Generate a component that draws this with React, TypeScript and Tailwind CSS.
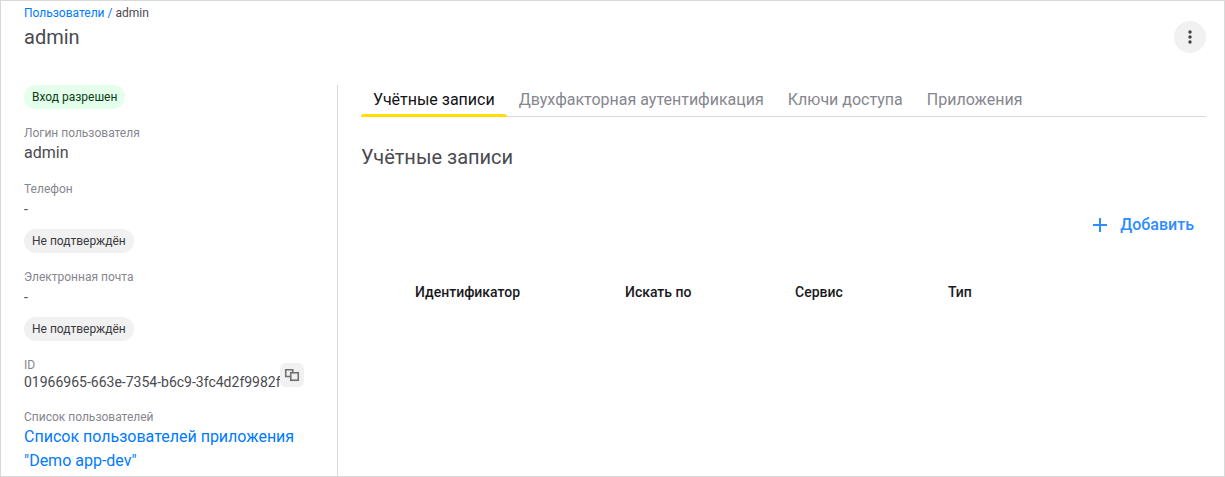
import { useState, type ReactNode } from 'react';

const tabs = ['Учётные записи', 'Двухфакторная аутентификация', 'Ключи доступа', 'Приложения'];

interface FieldProps {
  label: string;
  children: ReactNode;
}

function Field({ label, children }: FieldProps) {
  return (
    <div>
      <dt className="text-xs text-[#86868e]">{label}</dt>
      <dd className="text-base">{children}</dd>
    </div>
  );
}

function Badge({ tone, children }: { tone: 'green' | 'gray'; children: ReactNode }) {
  const color = tone === 'green' ? 'bg-[#e4ffeb] text-[#0a3d14]' : 'bg-[#f1f1f1] text-[#3a3a3f]';
  return <span className={`block w-fit rounded-full px-2 text-xs leading-6 ${color}`}>{children}</span>;
}

function Sidebar() {
  const userId = '01966965-663e-7354-b6c9-3fc4d2f9982f';

  return (
    <aside className="w-[314px] shrink-0 border-r border-[#d9d9d9] pr-8 pb-[3px]">
      <Badge tone="green">Вход разрешен</Badge>
      <dl className="mt-4 flex flex-col gap-4">
        <Field label="Логин пользователя">admin</Field>
        <Field label="Телефон">
          <p className="mb-2 text-sm leading-6">-</p>
          <Badge tone="gray">Не подтверждён</Badge>
        </Field>
        <Field label="Электронная почта">
          <p className="mb-2 text-sm leading-6">-</p>
          <Badge tone="gray">Не подтверждён</Badge>
        </Field>
        <div className="flex items-center">
          <div className="w-64">
            <dt className="text-xs text-[#86868e]">ID</dt>
            <dd className="pb-0.5 text-sm leading-[18px] whitespace-nowrap">{userId}</dd>
          </div>
          <button
            type="button"
            aria-label="Скопировать ID"
            className="flex size-6 shrink-0 items-center justify-center rounded-md bg-[#f1f1f1]"
            onClick={() => navigator.clipboard?.writeText(userId)}
          >
            <svg width="16" height="16" viewBox="0 0 16 16" fill="none" stroke="#707073" strokeWidth="1.6">
              <path d="M6 9.5H1.75V2.75H8.75V5" />
              <rect x="6.75" y="5.75" width="7.5" height="7.5" />
            </svg>
          </button>
        </div>
        <Field label="Список пользователей">
          <a href="#users" className="block text-[#007aff]">
            Список пользователей приложения "Demo app-dev"
          </a>
        </Field>
      </dl>
    </aside>
  );
}

export default function App() {
  const [active, setActive] = useState(0);

  return (
    <div className="flex min-h-screen flex-col border border-[#d9d9d9] bg-white pt-1 pr-[18px] pl-[23px] font-['Roboto',sans-serif] text-[#4a4a50]">
      <header className="flex items-end justify-between">
        <div>
          <nav className="text-xs">
            <a href="#list" className="text-[#007aff]">Пользователи /</a> <span>admin</span>
          </nav>
          <h1 className="mt-1 text-xl leading-6">admin</h1>
        </div>
        <button
          type="button"
          aria-label="Действия"
          className="-mb-1 flex size-8 items-center justify-center rounded-full bg-[#f1f1f1]"
        >
          <svg width="16" height="16" viewBox="0 0 16 16" fill="#414146">
            <circle cx="8" cy="3" r="1.7" />
            <circle cx="8" cy="8" r="1.7" />
            <circle cx="8" cy="13" r="1.7" />
          </svg>
        </button>
      </header>

      <div className="mt-9 flex grow">
        <Sidebar />
        <main className="min-w-0 grow pl-[23px]">
          <div role="tablist" className="flex h-8 border-b border-[#d9d9d9]">
            {tabs.map((tab, i) => (
              <button
                key={tab}
                type="button"
                role="tab"
                aria-selected={i === active}
                onClick={() => setActive(i)}
                className={
                  i === active
                    ? 'relative px-3 pb-0.5 text-[#121215] after:absolute after:inset-x-0 after:-bottom-px after:h-[3px] after:rounded-t-sm after:bg-[#ffdd00]'
                    : 'px-3 pb-0.5 text-[#86868e]'
                }
              >
                {tab}
              </button>
            ))}
          </div>

          <h2 className="mt-7 text-xl leading-6">{tabs[active]}</h2>

          <div className="mt-9 flex justify-end">
            <button type="button" className="flex h-10 items-center gap-2 pr-3 font-medium text-[#2d8cff]">
              <svg width="24" height="24" viewBox="0 0 24 24" stroke="currentColor" strokeWidth="2">
                <path d="M12 5V19M5 12H19" />
              </svg>
              Добавить
            </button>
          </div>

          <table className="mt-7 w-full table-fixed text-left text-sm text-[#1a1a1d]">
            <thead>
              <tr className="h-[38px]">
                <th className="w-[38px]" />
                <th className="w-[210px] pl-4 font-medium">Идентификатор</th>
                <th className="w-[170px] pl-4 font-medium">Искать по</th>
                <th className="w-[153px] pl-4 font-medium">Сервис</th>
                <th className="pl-4 font-medium">Тип</th>
              </tr>
            </thead>
            <tbody />
          </table>
        </main>
      </div>
    </div>
  );
}
